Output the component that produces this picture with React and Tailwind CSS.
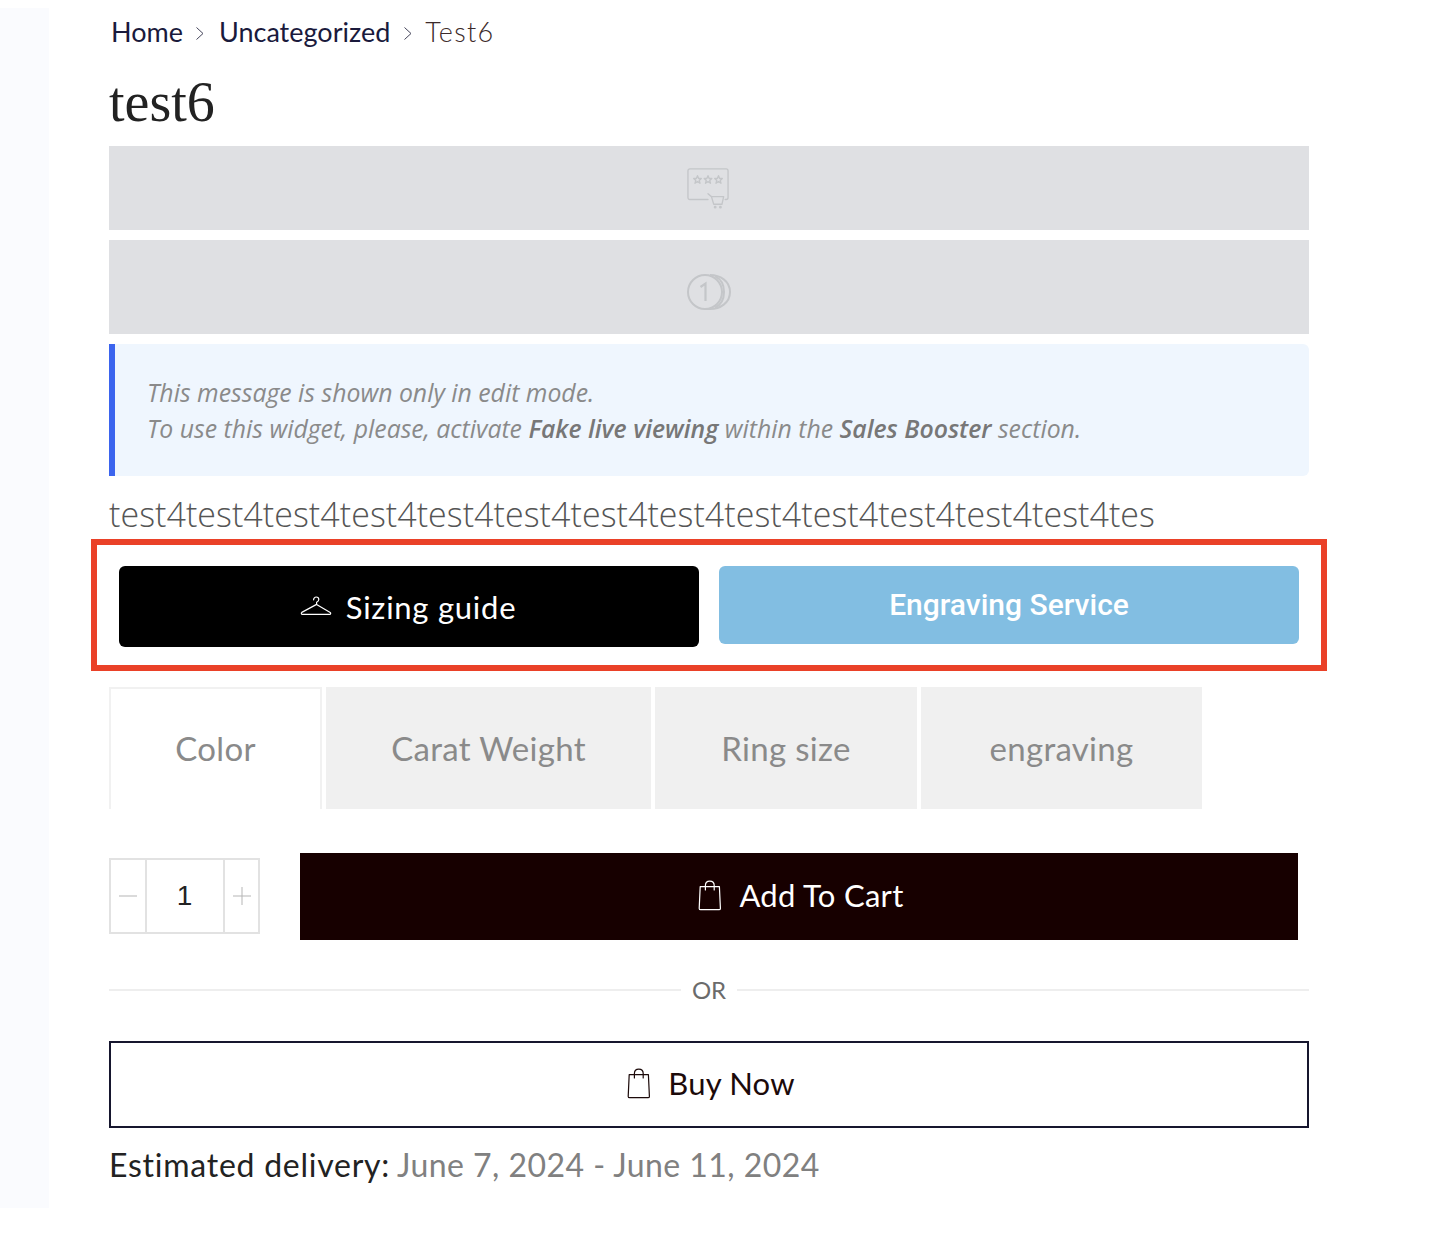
import React from 'react';

// shopping bag used on both cart buttons
const BagIcon = ({ className }) => (
  <svg className={className} width="24" height="31" viewBox="0 0 24 31" fill="none" stroke="currentColor" strokeWidth="1.2" strokeLinecap="round" strokeLinejoin="round">
    <path d="M2.2 6.6H21.4L22.4 28.4C22.4 29.3 21.9 29.7 21 29.7H2.6C1.7 29.7 1.2 29.3 1.2 28.4L2.2 6.6Z" />
    <path d="M7.4 10V5.6C7.4 3 9.2 1.2 11.8 1.2C14.4 1.2 16.2 3 16.2 5.6V10" />
  </svg>
);

const HangerIcon = () => (
  <svg width="32" height="22" viewBox="0 0 32 22" fill="none" stroke="currentColor" strokeWidth="1.2" strokeLinecap="round" strokeLinejoin="round">
    <path d="M13.6 3.8C13.6 2.2 14.8 1 16.2 1C17.7 1 18.8 2.2 18.8 3.5C18.8 5 17.8 5.6 16.6 6.2V8.4L30.2 16.4C31 17 30.8 18.4 29.6 18.4H2.4C1.2 18.4 1 17 1.8 16.4L16.6 8.4" />
  </svg>
);

const ReviewIcon = () => (
  <svg width="42" height="42" viewBox="0 0 44 44" fill="none" stroke="#c4c6c9" strokeWidth="1.4" strokeLinecap="round" strokeLinejoin="round">
    <path d="M22 33H3C1.8 33 1 32.2 1 31V3C1 1.8 1.8 1 3 1H41C42.2 1 43 1.8 43 3V31C43 32.2 42.2 33 41 33H40" />
    <path d="M11 8L12.2 11H15L12.8 13L13.6 16L11 14.2L8.4 16L9.2 13L7 11H9.8Z" />
    <path d="M22 8L23.2 11H26L23.8 13L24.6 16L22 14.2L19.4 16L20.2 13L18 11H20.8Z" />
    <path d="M33 8L34.2 11H37L34.8 13L35.6 16L33 14.2L30.4 16L31.2 13L29 11H31.8Z" />
    <path d="M22 27L25.6 30L28 38H36.6L38.4 30H26" />
    <circle cx="29.5" cy="41" r="0.8" />
    <circle cx="35" cy="41" r="0.8" />
  </svg>
);

const CoinIcon = () => (
  <svg width="46" height="38" viewBox="0 0 46 38" fill="none" stroke="#c4c6c9" strokeWidth="2">
    <circle cx="19" cy="19" r="17" />
    <path d="M24 2C34 2 44 8 44 19C44 30 34 36 24 36H19" />
    <path d="M29 3.4C35 6 38 12 38 19C38 26 35 32 29 34.6" />
    <path d="M14.5 14L19.5 10.5V28" strokeWidth="2.2" />
  </svg>
);

const Chevron = () => (
  <svg width="10" height="16" viewBox="0 0 10 16" fill="none" stroke="#44445a" strokeWidth="1">
    <path d="M1.5 2.5L8 8.5L1.5 14.5" />
  </svg>
);

const tabs = [
  { label: 'Color', width: 'w-[213px]', active: true },
  { label: 'Carat Weight', width: 'w-[325px]' },
  { label: 'Ring size', width: 'w-[262px]' },
  { label: 'engraving', width: 'w-[281px]' },
];

export default function App() {
  return (
    <div className="flex min-h-[1252px] bg-white font-['Lato','Noto_Sans',sans-serif]">
      <div className="mt-2 h-[1200px] w-[49px] shrink-0 bg-[#fafbfe]" />

      <main className="ml-[60px] w-[1200px] shrink-0">
        {/* breadcrumb */}
        <nav className="flex h-[50px] items-center pb-px pl-[2px] pt-[14px] text-[27px] leading-none">
          <span className="text-[#1a1a3c]">Home</span>
          <span className="ml-3 mr-[14px] mt-[3px]"><Chevron /></span>
          <span className="text-[#1a1a3c]">Uncategorized</span>
          <span className="ml-[13px] mr-[12px] mt-[3px]"><Chevron /></span>
          <span className="font-light tracking-[1.3px] text-[#3c2a2a]">Test6</span>
        </nav>

        <h1 className="h-[96px] pt-[19px] font-['Liberation_Serif',serif] text-[56px] leading-[66px] text-[#222222]">test6</h1>

        <div className="flex h-[84px] items-center justify-center bg-[#dfe0e3] pr-[2px] pt-[2px]">
          <ReviewIcon />
        </div>
        <div className="mt-[10px] flex h-[94px] items-center justify-center bg-[#dfe0e3] pt-[10px]">
          <CoinIcon />
        </div>

        {/* edit mode notice */}
        <div className="mt-[10px] h-[132px] rounded-r-md border-l-[6px] border-[#3b64ee] bg-[#eff6fe] pl-8 pt-[30px] font-['Open_Sans',sans-serif] text-[24.8px] italic leading-[36px] text-[#8a8a8a]">
          <p>This message is shown only in edit mode.</p>
          <p>
            To use this widget, please, activate <b className="font-semibold text-[#777777]">Fake live viewing</b> within the <b className="font-semibold text-[#777777]">Sales Booster</b> section.
          </p>
        </div>

        <p className="mt-[17px] h-[47px] font-['Open_Sans',sans-serif] text-[34px] font-light leading-[42px] tracking-[0.05px] text-[#555555]">
          test4test4test4test4test4test4test4test4test4test4test4test4test4tes
        </p>

        {/* outlined buttons row */}
        <div className="-mx-[18px] -mt-px box-border flex h-[132px] items-start gap-5 border-[6px] border-[#ea4128] px-[22px] pt-[21px]">
          <button className="flex h-[81px] w-[580px] items-center justify-center gap-[14px] rounded-md bg-black pr-[2px] text-[31px] tracking-[0.75px] text-white">
            <HangerIcon />
            <span className="mt-[2px]">Sizing guide</span>
          </button>
          <button className="flex h-[78px] w-[580px] items-center justify-center rounded-md bg-[#82bee2] pb-[2px] font-['Roboto',sans-serif] text-[30px] font-medium text-white">
            Engraving Service
          </button>
        </div>

        {/* variation tabs */}
        <div className="mt-4 flex h-[122px] gap-1">
          {tabs.map((t) => (
            <div
              key={t.label}
              className={`flex items-center justify-center text-[33px] tracking-[0.3px] text-[#8a8a8a] ${t.width} ${t.active ? 'border-x-2 border-t-2 border-[#f1f1f1] bg-white' : 'bg-[#f0f0f0] pt-px'}`}
            >
              {t.label}
            </div>
          ))}
        </div>

        {/* quantity + add to cart */}
        <div className="mt-[44px] flex h-[87px] items-start">
          <div className="mt-[5px] flex h-[76px] w-[151px] border-2 border-[#e2e2e2]">
            <div className="flex w-[34px] items-center justify-center">
              <svg width="18" height="2" viewBox="0 0 18 2"><path d="M0 1H18" stroke="#b5b5b5" strokeWidth="1" /></svg>
            </div>
            <div className="flex w-[80px] items-center justify-center border-x-2 border-[#e2e2e2] pr-px font-['Liberation_Sans',sans-serif] text-[28px] text-[#222222]">1</div>
            <div className="flex flex-1 items-center justify-center">
              <svg width="18" height="18" viewBox="0 0 18 18"><path d="M0 9H18M9 0V18" stroke="#b5b5b5" strokeWidth="1" /></svg>
            </div>
          </div>
          <button className="ml-10 flex h-[87px] w-[998px] items-center justify-center gap-[17px] bg-[#170000] pb-[2px] pl-1 text-[31px] tracking-[0.3px] text-white">
            <BagIcon />
            <span>Add To Cart</span>
          </button>
        </div>

        {/* or divider */}
        <div className="mt-[35px] flex h-[30px] items-center">
          <div className="h-[2px] flex-1 bg-[#eeeeee]" />
          <span className="mx-[11px] text-[24px] text-[#6b6b6b]">OR</span>
          <div className="h-[2px] flex-1 bg-[#eeeeee]" />
        </div>

        <button className="mt-[36px] flex h-[87px] w-full items-center justify-center gap-[17px] border-2 border-[#16162e] bg-white pb-[2px] pl-1 text-[31px] tracking-[0.2px] text-[#1c0a0a]">
          <BagIcon />
          <span>Buy Now</span>
        </button>

        <p className="mt-[15px] text-[32px] leading-[44px] tracking-[0.75px] text-[#222222]">
          Estimated delivery: <span className="-ml-[2px] tracking-[0.45px] text-[#808080]">June 7, 2024 - June 11, 2024</span>
        </p>
      </main>
    </div>
  );
}
